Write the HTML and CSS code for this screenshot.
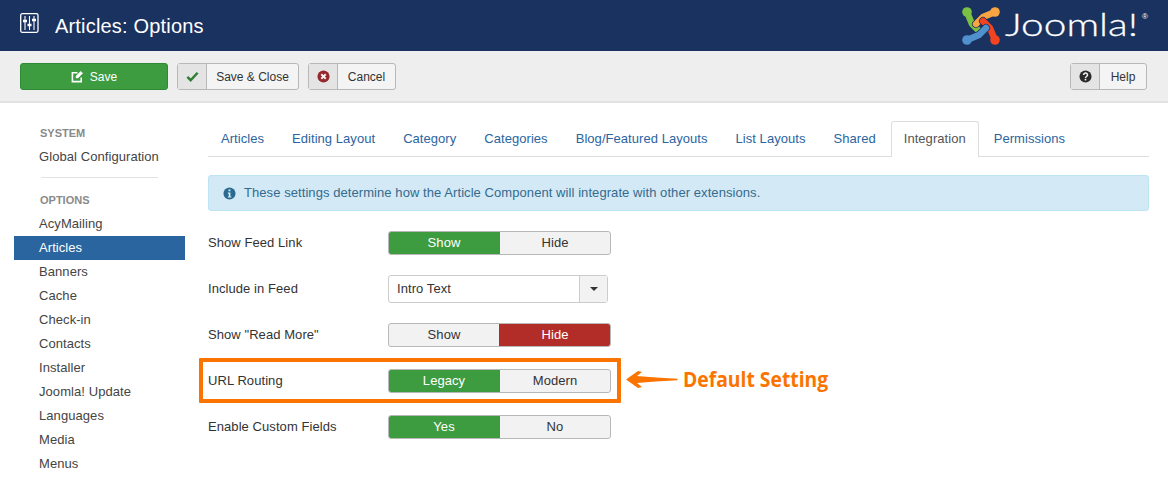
FILE: index.html
```html
<!DOCTYPE html>
<html lang="en">
<head>
<meta charset="utf-8">
<title>Articles: Options</title>
<link rel="stylesheet" href="styles.css">
</head>
<body>
<header class="topbar">
  <svg class="title-icon" viewBox="0 0 19 20" width="19" height="20" fill="none" stroke="#fff">
    <rect x=".7" y=".7" width="17.300" height="18.600" rx="1.500" stroke-width="1.300"/>
    <path d="M5 3v14M9.500 3v14M14 3v14" stroke-width="1.100"/>
    <path d="M3 8h4M7.500 12h4M12 7h4" stroke-width="2.400"/>
  </svg>
  <h1 class="page-title">Articles: Options</h1>
  <div class="brand">
    <svg class="brand-mark" viewBox="0 0 40 40" width="40" height="40" fill="none" stroke-linecap="round" stroke-linejoin="round">
      <path d="M6 6 L11 18 L18 25" stroke="#7ac143" stroke-width="6.400"/>
      <path d="M34 6 L22 11 L15 18" stroke="#1a3260" stroke-width="8"/>
      <path d="M34 6 L22 11 L15 18" stroke="#f9a541" stroke-width="6.400"/>
      <path d="M34 34 L29 22 L22 15" stroke="#1a3260" stroke-width="8"/>
      <path d="M34 34 L29 22 L22 15" stroke="#f44321" stroke-width="6.400"/>
      <path d="M6 34 L18 29 L25 22" stroke="#1a3260" stroke-width="8"/>
      <path d="M6 34 L18 29 L25 22" stroke="#5091cd" stroke-width="6.400"/>
      <circle cx="6" cy="6" r="4.800" fill="#7ac143"/>
      <circle cx="34" cy="6" r="4.800" fill="#f9a541"/>
      <circle cx="34" cy="34" r="4.800" fill="#f44321"/>
      <circle cx="6" cy="34" r="4.800" fill="#5091cd"/>
    </svg>
    <div class="brand-name"><span class="brand-text">Joomla!</span><span class="reg">®</span></div>
  </div>
</header>

<div class="toolbar">
  <button class="btn-save" type="button">
    <svg viewBox="0 0 14 14" width="13" height="13" fill="none" stroke="#fff" stroke-width="1.700"><path d="M11 8v4.500H1.500V3H7"/><path d="M5.500 6.500v2h2l5-5-2-2z" fill="#fff" stroke-width=".7"/></svg>
    Save
  </button>
  <button class="btn-tool w-close" type="button">
    <span class="btn-icon"><svg viewBox="0 0 14 14" width="13" height="13" fill="none" stroke="#2f7d32" stroke-width="2.600"><path d="M1.500 7.500l3.500 3.500 7.500-8"/></svg></span>
    <span class="btn-label">Save &amp; Close</span>
  </button>
  <button class="btn-tool w-cancel" type="button">
    <span class="btn-icon"><svg viewBox="0 0 14 14" width="13" height="13"><circle cx="7" cy="7" r="6.500" fill="#96282b"/><path d="M4.600 4.600l4.800 4.800M9.400 4.600l-4.800 4.800" stroke="#f2f2f2" stroke-width="2"/></svg></span>
    <span class="btn-label">Cancel</span>
  </button>
  <button class="btn-tool w-help" type="button">
    <span class="btn-icon"><svg viewBox="0 0 14 14" width="13" height="13"><circle cx="7" cy="7" r="6.500" fill="#2b2b2b"/><path d="M4.900 5.500c0-3 4.400-2.800 4.300 0 0 1.500-2.200 1.500-2.200 3" fill="none" stroke="#f2f2f2" stroke-width="1.600"/><rect x="6.100" y="9.500" width="1.800" height="1.700" fill="#f2f2f2"/></svg></span>
    <span class="btn-label">Help</span>
  </button>
</div>

<div class="content">
  <nav class="sidebar">
    <div class="nav-head">SYSTEM</div>
    <a class="nav-item">Global Configuration</a>
    <div class="nav-divider"></div>
    <div class="nav-head">OPTIONS</div>
    <a class="nav-item">AcyMailing</a>
    <a class="nav-item active">Articles</a>
    <a class="nav-item">Banners</a>
    <a class="nav-item">Cache</a>
    <a class="nav-item">Check-in</a>
    <a class="nav-item">Contacts</a>
    <a class="nav-item">Installer</a>
    <a class="nav-item">Joomla! Update</a>
    <a class="nav-item">Languages</a>
    <a class="nav-item">Media</a>
    <a class="nav-item">Menus</a>
  </nav>

  <main class="main">
    <ul class="tabs">
      <li class="tab">Articles</li>
      <li class="tab">Editing Layout</li>
      <li class="tab">Category</li>
      <li class="tab">Categories</li>
      <li class="tab">Blog/Featured Layouts</li>
      <li class="tab">List Layouts</li>
      <li class="tab">Shared</li>
      <li class="tab active">Integration</li>
      <li class="tab">Permissions</li>
    </ul>
    <div class="alert">
      <svg viewBox="0 0 14 14" width="13" height="13"><circle cx="7" cy="7" r="6.500" fill="#2a6a90"/><rect x="6" y="2.600" width="2" height="2" fill="#d4e9f6"/><path d="M5.200 6h2.800v4.200h1v1.200H5.200v-1.200h1V7.200h-1z" fill="#d4e9f6"/></svg>
      <span>These settings determine how the Article Component will integrate with other extensions.</span>
    </div>

    <div class="row">
      <label class="row-label">Show Feed Link</label>
      <div class="toggle"><span class="opt on-green">Show</span><span class="opt">Hide</span></div>
    </div>
    <div class="row">
      <label class="row-label">Include in Feed</label>
      <div class="select"><span class="select-value">Intro Text</span><span class="select-arrow"><i class="caret"></i></span></div>
    </div>
    <div class="row">
      <label class="row-label">Show "Read More"</label>
      <div class="toggle"><span class="opt">Show</span><span class="opt on-red">Hide</span></div>
    </div>
    <div class="row">
      <label class="row-label">URL Routing</label>
      <div class="toggle"><span class="opt on-green">Legacy</span><span class="opt">Modern</span></div>
      <div class="callout-box"></div>
      <svg class="callout-arrow" viewBox="0 0 52 17" width="52" height="17"><path d="M0 8.500 L12 0 L16 1 L11 5 L30 6.500 L51.500 7.800 L51.500 9.200 L30 10.500 L11 12 L16 16 L12 17 Z" fill="#fb7400"/></svg>
      <span class="callout-text">Default Setting</span>
    </div>
    <div class="row">
      <label class="row-label">Enable Custom Fields</label>
      <div class="toggle"><span class="opt on-green">Yes</span><span class="opt">No</span></div>
    </div>
  </main>
</div>
</body>
</html>
```
FILE: styles.css
```css
* { box-sizing: border-box; }
html, body { margin: 0; padding: 0; }
body {
  width: 1168px;
  height: 480px;
  overflow: hidden;
  background: #fff;
  color: #333;
  font-family: "Liberation Sans", Arial, sans-serif;
  font-size: 13px;
  line-height: 18px;
  letter-spacing: .07px;
}
.topbar {
  height: 51px;
  background: #1a3260;
  display: flex;
  align-items: center;
  padding: 0 28px 0 20px;
  color: #fff;
}
.title-icon { margin-top: -5px; }
.page-title {
  margin: 0 0 0 16px;
  font-size: 20px;
  font-weight: 400;
  line-height: 24px;
  letter-spacing: .18px;
}
.brand { margin-left: auto; display: flex; align-items: center; }
.brand-mark { margin-top: 1px; }
.brand-name {
  width: 135px;
  margin-left: 4px;
  margin-top: -3px;
  position: relative;
  height: 40px;
}
.brand-text {
  display: block;
  font-family: "Lato", sans-serif;
  font-weight: 300;
  font-size: 32px;
  line-height: 40px;
  letter-spacing: 0;
  -webkit-text-stroke: .3px #fff;
  transform: scaleX(1.27);
  transform-origin: left center;
  white-space: nowrap;
}
.reg { position: absolute; right: -8px; top: 8px; font-size: 8px; line-height: 10px; letter-spacing: 0; }

.toolbar {
  height: 52px;
  background: #eee;
  border-bottom: 2px solid #e2e2e2;
  display: flex;
  align-items: flex-start;
  gap: 9px;
  padding: 12px 21px 0 20px;
}
button { font: inherit; margin: 0; cursor: pointer; letter-spacing: 0; }
.btn-save {
  width: 148px;
  height: 27px;
  background: #3d9b40;
  border: 1px solid #2f8a35;
  border-radius: 3px;
  color: #fff;
  font-size: 12px;
  display: flex;
  align-items: center;
  justify-content: center;
  gap: 6px;
  padding: 0;
}
.btn-tool {
  height: 27px;
  display: flex;
  align-items: stretch;
  padding: 0;
  background: #f4f4f4;
  border: 1px solid #b8b8b8;
  border-radius: 3px;
  color: #333;
  font-size: 12px;
}
.w-close { width: 122px; }
.w-cancel { width: 88px; }
.w-help { width: 77px; margin-left: auto; }
.btn-icon {
  width: 29px;
  flex: none;
  background: #e4e4e4;
  border-right: 1px solid #b8b8b8;
  display: flex;
  align-items: center;
  justify-content: center;
}
.btn-label { flex: 1; text-align: center; line-height: 25px; padding-top: 1px; }

.content { display: flex; align-items: flex-start; padding: 0 19px 0 14px; }
.sidebar { width: 171px; padding-top: 21px; flex: none; }
.nav-head {
  padding-left: 26px;
  margin-bottom: 3px;
  color: #8a8a8a;
  font-size: 11px;
  font-weight: 700;
  line-height: 18px;
  letter-spacing: 0;
}
.nav-item {
  display: block;
  height: 24px;
  padding-left: 25px;
  line-height: 24px;
  color: #444;
  font-size: 13px;
}
.nav-item.active { background: #2a659f; color: #fff; }
.nav-divider { height: 1px; margin: 8px 27px 13px 27px; background: #e2e2e2; }

.main { flex: 1; margin-left: 23px; padding-top: 18px; }
.tabs {
  list-style: none;
  margin: 0;
  padding: 0;
  height: 36px;
  display: flex;
  border-bottom: 1px solid #ddd;
}
.tab {
  height: 36px;
  padding: 0 12px;
  margin-right: 2px;
  border: 1px solid transparent;
  border-bottom: 0;
  line-height: 33px;
  color: #2a659f;
  font-size: 13px;
  letter-spacing: .05px;
}
.tab.active {
  background: #fff;
  color: #555;
  border-color: #ddd;
  border-radius: 3px 3px 0 0;
}
.alert {
  margin-top: 18px;
  height: 36px;
  display: flex;
  align-items: center;
  gap: 8px;
  padding: 0 14px;
  background: #d3e9f6;
  border: 1px solid #bce4f1;
  border-radius: 3px;
  color: #336b8e;
}
.row {
  position: relative;
  height: 46px;
  display: flex;
  align-items: center;
}
.alert + .row { margin-top: 9px; }
.row-label { width: 180px; flex: none; color: #333; }
.toggle {
  width: 223px;
  height: 24px;
  display: flex;
  border: 1px solid #b8b8b8;
  border-radius: 3px;
  background: #f2f2f2;
  overflow: hidden;
}
.opt {
  flex: 1;
  text-align: center;
  line-height: 22px;
  color: #333;
}
.on-green { flex: 0 0 112px; background: #3d9b40; color: #fff; margin: -1px 0 -1px -1px; line-height: 24px; }
.on-red { flex: 0 0 112px; background: #b32d28; color: #fff; margin: -1px -1px -1px 0; line-height: 24px; }
.select {
  width: 220px;
  height: 28px;
  display: flex;
  border: 1px solid #ccc;
  border-radius: 3px;
  background: #fff;
}
.select-value { flex: 1; padding-left: 8px; line-height: 25px; color: #333; }
.select-arrow {
  width: 28px;
  background: #f2f2f2;
  border-left: 1px solid #ccc;
  display: flex;
  align-items: center;
  justify-content: center;
}
.caret {
  width: 0;
  height: 0;
  border: 4px solid transparent;
  border-top-color: #333;
  border-bottom: 0;
}
.callout-box {
  position: absolute;
  left: -9px;
  top: 0;
  width: 422px;
  height: 45px;
  border: 4px solid #fb7400;
  border-radius: 1px;
}
.callout-arrow { position: absolute; left: 418px; top: 13px; }
.callout-text {
  position: absolute;
  left: 475px;
  top: 8px;
  font-family: "Open Sans", sans-serif;
  font-weight: 700;
  font-size: 21px;
  line-height: 26px;
  letter-spacing: 0;
  color: #fb7400;
  white-space: nowrap;
  transform: scaleX(.92);
  transform-origin: left center;
}
```
